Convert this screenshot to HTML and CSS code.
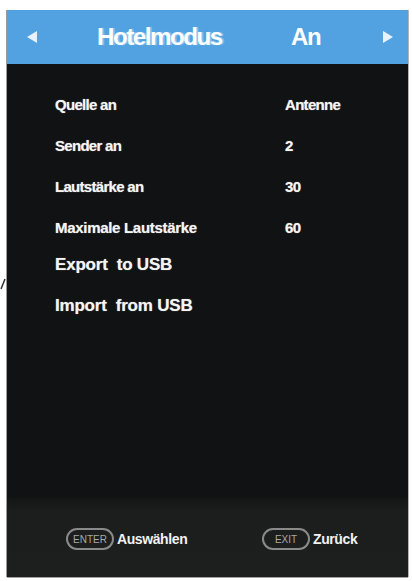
FILE: index.html
```html
<!DOCTYPE html>
<html lang="de">
<head>
<meta charset="utf-8">
<title>Hotelmodus</title>
<link rel="stylesheet" href="styles.css">
</head>
<body>
<div class="page">
  <svg class="mark" width="6" height="12" viewBox="0 0 6 12"><path d="M5 1 L1 11" stroke="#333" stroke-width="1.5" fill="none"/></svg>
  <div class="panel">
    <div class="header">
      <svg class="arrow" width="10" height="12" viewBox="0 0 10 12"><polygon points="10,0 10,12 0,6" fill="#e8f2fb"/></svg>
      <span class="title">Hotelmodus</span>
      <span class="state">An</span>
      <svg class="arrow" width="10" height="12" viewBox="0 0 10 12"><polygon points="0,0 0,12 10,6" fill="#e8f2fb"/></svg>
    </div>
    <div class="body">
      <div class="row"><span class="label">Quelle an</span><span class="value">Antenne</span></div>
      <div class="row"><span class="label">Sender an</span><span class="value">2</span></div>
      <div class="row"><span class="label">Lautstärke an</span><span class="value">30</span></div>
      <div class="row"><span class="label wide">Maximale Lautstärke</span><span class="value">60</span></div>
      <div class="row big first-big"><span class="label">Export&nbsp; to USB</span></div>
      <div class="row big"><span class="label">Import&nbsp; from USB</span></div>
    </div>
    <div class="footer">
      <div class="hint"><span class="key">ENTER</span><span class="hint-text">Auswählen</span></div>
      <div class="hint"><span class="key">EXIT</span><span class="hint-text">Zurück</span></div>
    </div>
  </div>
</div>
</body>
</html>
```

FILE: styles.css
```css
html, body {
  margin: 0;
  padding: 0;
  background: #ffffff;
}
body {
  font-family: "Liberation Sans", Arial, sans-serif;
}
.page {
  position: relative;
  width: 412px;
  height: 581px;
  padding: 10px 0 0 7px;
  box-sizing: border-box;
}
.mark {
  position: absolute;
  left: 0;
  top: 278px;
}
.panel {
  width: 401px;
  height: 567px;
  display: flex;
  flex-direction: column;
  background: #111213;
  box-shadow: -1px 0 0 #9a9a9a, 1px 0 0 #b5b5b5, 0 1px 0 #a0a0a0;
}
.header {
  height: 54px;
  background: #52a2e1;
  display: flex;
  align-items: center;
  padding: 0 15px 0 20px;
  color: #ffffff;
  font-weight: bold;
  font-size: 24px;
  letter-spacing: -1.4px;
}
.title {
  margin-left: 60px;
  width: 194px;
  text-shadow: 2px 0 1px rgba(255,255,255,0.35);
}
.state {
  flex: 1;
}
.body {
  flex: 1;
  padding: 20px 0 0 48px;
  display: flex;
  flex-direction: column;
  color: #f4f4f4;
  font-weight: bold;
  font-size: 15px;
  letter-spacing: -0.7px;
}
.row {
  height: 41px;
  display: flex;
  align-items: center;
  text-shadow: 0 0 1px rgba(255,255,255,0.6);
}
.label {
  width: 230px;
}
.label.wide {
  letter-spacing: -0.3px;
}
.row.big {
  font-size: 17px;
  letter-spacing: -0.2px;
}
.row.first-big {
  margin-top: -4px;
}
.footer {
  height: 80px;
  background: linear-gradient(#131414, #1c1d1d 14px, #1d1e1e);
  display: grid;
  grid-template-columns: 196px auto;
  align-items: center;
  padding: 4px 0 0 59px;
  box-sizing: border-box;
}
.hint {
  display: flex;
  align-items: center;
}
.key {
  width: 44px;
  height: 18px;
  border: 2px solid #8a8a8a;
  border-radius: 11px;
  color: #a8a8a8;
  font-size: 10px;
  display: flex;
  align-items: center;
  justify-content: center;
  letter-spacing: 0;
}
.hint-text {
  margin-left: 3px;
  color: #f2f2f2;
  font-weight: bold;
  font-size: 14px;
  letter-spacing: -0.4px;
}
```
